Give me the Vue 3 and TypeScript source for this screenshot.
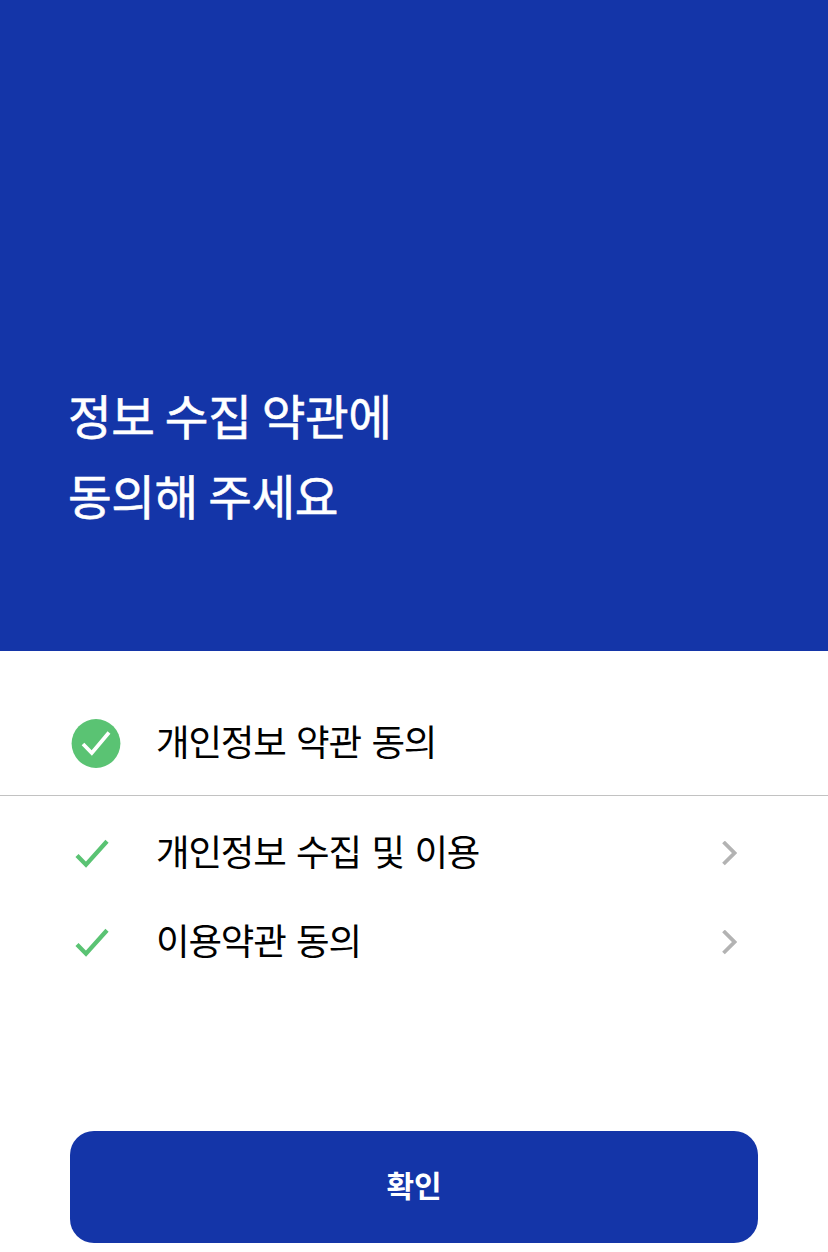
<script setup lang="ts">
interface Term {
  id: number
  label: string
}

const terms: Term[] = [
  { id: 1, label: '개인정보 수집 및 이용' },
  { id: 2, label: '이용약관 동의' },
]
</script>

<template>
  <main class="screen">
    <header class="hero">
      <h1 class="title">정보 수집 약관에<br />동의해 주세요</h1>
    </header>

    <div class="row all">
      <svg class="badge" width="50" height="50" viewBox="0 0 50 50">
        <circle cx="25" cy="25.5" r="24.4" fill="#5ac373" />
        <path d="M12 26 L20.8 35 L38 14.5" fill="none" stroke="#fff" stroke-width="3.7" />
      </svg>
      <span class="label">개인정보 약관 동의</span>
    </div>

    <div class="terms">
      <div v-for="term in terms" :key="term.id" class="row">
        <svg class="check" width="34" height="30" viewBox="0 0 34 30">
          <path d="M2 16.5 L11 25.7 L32 2.3" fill="none" stroke="#5ac373" stroke-width="4.3" />
        </svg>
        <span class="label">{{ term.label }}</span>
        <svg class="chevron" width="16" height="26" viewBox="0 0 16 26">
          <path d="M2.5 1 L13.5 12 L2.5 23" fill="none" stroke="#b3b3b3" stroke-width="3.8" />
        </svg>
      </div>
    </div>

    <button class="confirm" type="button">확인</button>
  </main>
</template>

<style>
body {
  margin: 0;
  background: #fff;
}
</style>

<style scoped>
.screen {
  width: 100%;
  height: 1252px;
  overflow: hidden;
  background: #fff;
  font-family: "Noto Sans CJK KR", sans-serif;
}
.hero {
  box-sizing: border-box;
  height: 651px;
  padding: 375px 68px 0;
  background: #1435a8;
}
.title {
  margin: 0;
  color: #fff;
  font-size: 47.5px;
  font-weight: 400;
  letter-spacing: -0.4px;
  line-height: 80px;
  -webkit-text-stroke: 0.6px #fff;
}
.row {
  box-sizing: border-box;
  display: flex;
  align-items: center;
  height: 89px;
  padding: 0 91px 0 75px;
}
.all {
  height: 145px;
  padding: 40px 71px 0;
  border-bottom: 1px solid #c2c2c2;
}
.badge {
  margin-right: 35px;
}
.check {
  margin-right: 47px;
}
.label {
  padding-bottom: 4px;
  color: #000;
  font-size: 36.5px;
  letter-spacing: -1.2px;
  line-height: 50px;
  word-spacing: 3.6px;
}
.terms .label {
  padding-bottom: 6px;
}
.chevron {
  margin-left: auto;
}
.terms {
  padding-top: 13px;
}
.confirm {
  display: block;
  width: 688px;
  height: 112px;
  margin: 144px auto 0;
  padding: 0 0 5px;
  border: 0;
  border-radius: 24px;
  background: #1435a8;
  color: #fff;
  font: 700 30px/107px "Noto Sans CJK KR", sans-serif;
}
</style>
